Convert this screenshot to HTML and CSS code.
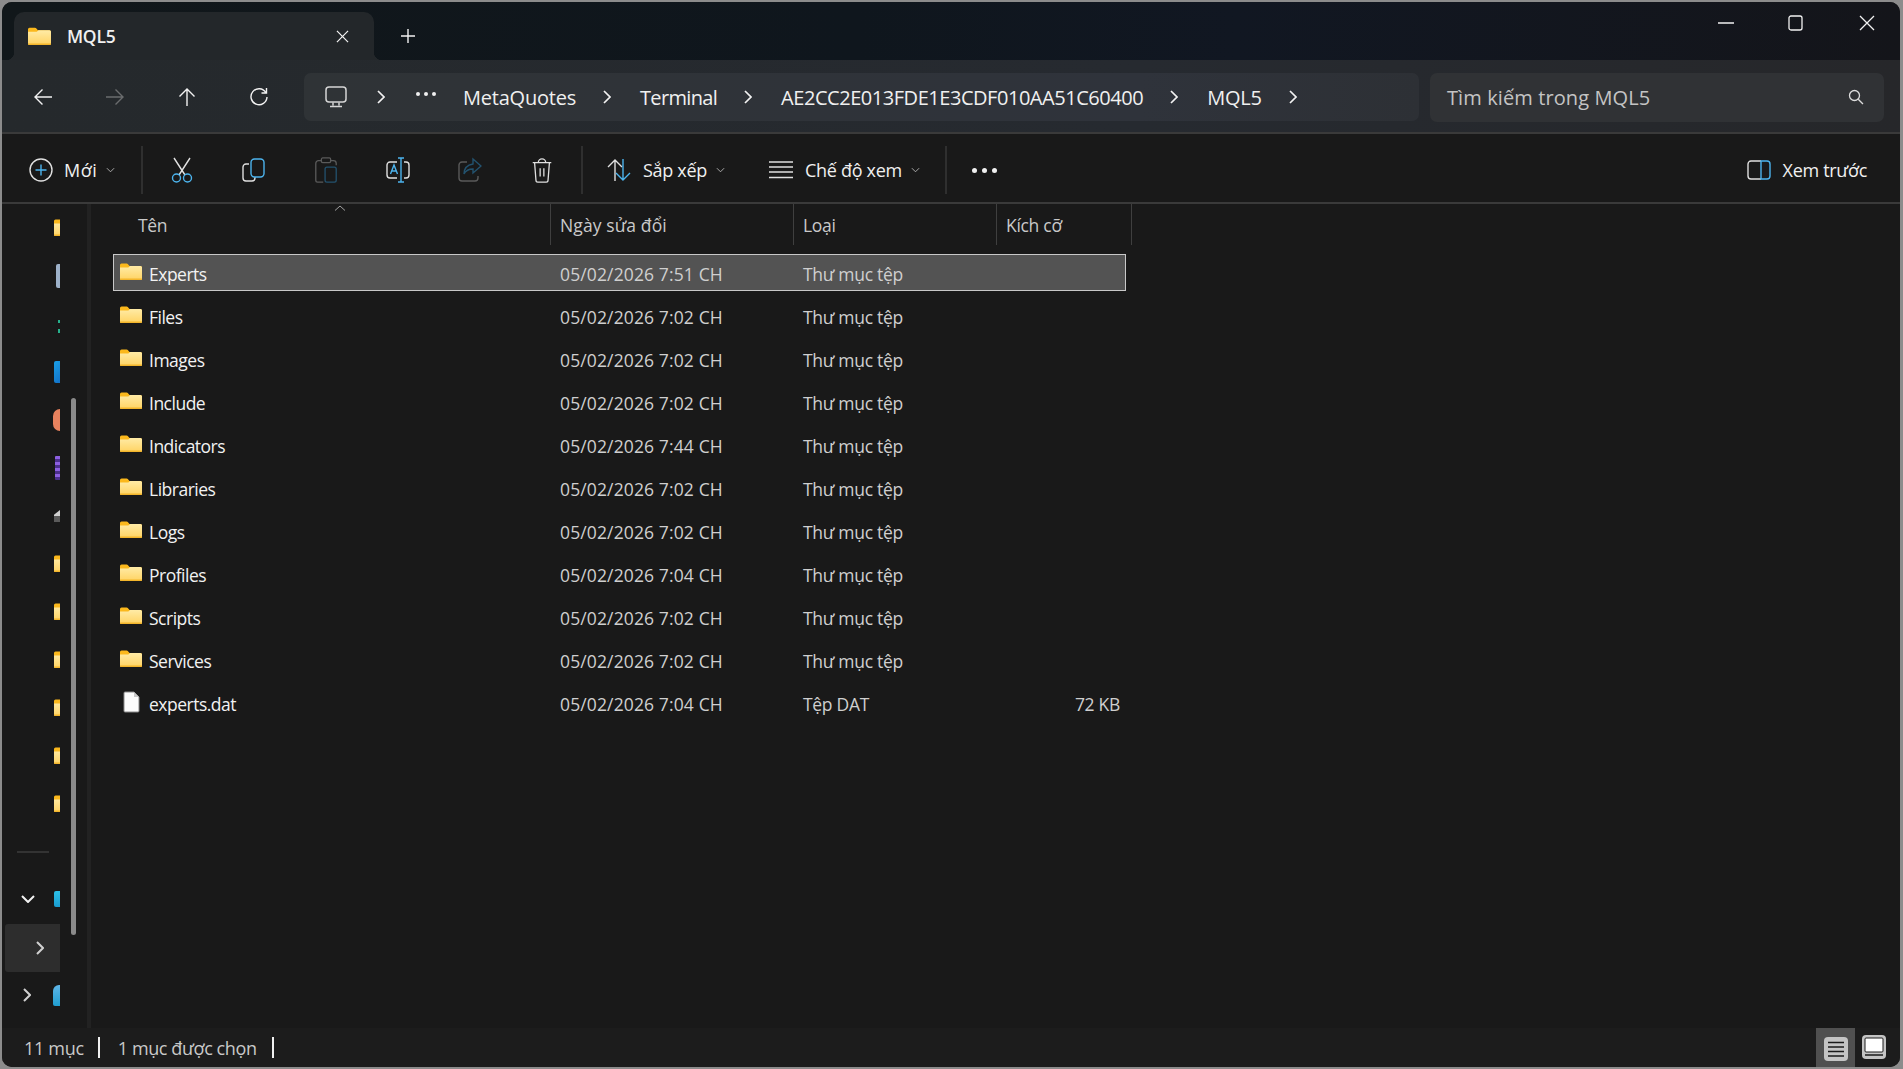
FILE: index.html
```html
<!DOCTYPE html>
<html lang="vi">
<head>
<meta charset="utf-8">
<title>MQL5</title>
<link rel="stylesheet" href="styles.css">
</head>
<body>
<svg class="defs" width="0" height="0" aria-hidden="true">
  <defs>
    <linearGradient id="fg" x1="0" y1="0" x2="0" y2="1"><stop offset="0" stop-color="#ffeba6"/><stop offset="1" stop-color="#ffd362"/></linearGradient>
    <symbol id="folder" viewBox="0 0 22 17">
      <path d="M0 2a1.5 1.5 0 0 1 1.5-1.5h5.2a1.5 1.5 0 0 1 1.1.5L9.5 3H20.5A1.5 1.5 0 0 1 22 4.5v3H0z" fill="#fbb81c"/>
      <path d="M0 4.5h8.4L10 3h10.5A1.5 1.5 0 0 1 22 4.5v11a1.5 1.5 0 0 1-1.5 1.5h-19A1.5 1.5 0 0 1 0 15.5z" fill="url(#fg)"/>
      <rect y="15.6" width="22" height="1.4" rx=".7" fill="#f3b52b"/>
    </symbol>
  </defs>
</svg>
<div class="window">
  <header class="titlebar">
    <div class="tab">
      <svg class="ic-folder-t"><use href="#folder"/></svg>
      <span class="tab-name">MQL5</span>
      <svg class="tab-x" viewBox="0 0 14 14"><path d="M1 1l12 12M13 1L1 13"/></svg>
    </div>
    <svg class="tab-plus" viewBox="0 0 16 16"><path d="M8 1v14M1 8h14"/></svg>
    <div class="winctl">
      <svg class="wc-min" viewBox="0 0 16 16"><path d="M0 8h16"/></svg>
      <svg class="wc-max" viewBox="0 0 15 16"><rect x="1" y="1" width="13" height="14" rx="2"/></svg>
      <svg class="wc-close" viewBox="0 0 16 16"><path d="M1 1l14 14M15 1L1 15"/></svg>
    </div>
  </header>

  <nav class="navbar">
    <div class="navbtns">
      <button class="nb"><svg viewBox="0 0 20 20"><path d="M19 10H2M9.5 2.5L2 10l7.5 7.5"/></svg></button>
      <button class="nb dim"><svg viewBox="0 0 20 20"><path d="M1 10h17M10.500 2.500L18 10l-7.500 7.500"/></svg></button>
      <button class="nb"><svg viewBox="0 0 20 20"><path d="M10 19V2M2.500 9.500L10 2l7.500 7.500"/></svg></button>
      <button class="nb"><svg viewBox="0 0 20 20"><path d="M16.800 5.500A8 8 0 1 0 18 10M17.500 1v5h-5"/></svg></button>
    </div>
    <div class="address">
      <svg class="pc" viewBox="0 0 22 22"><rect x="1" y="1" width="20" height="15" rx="3"/><path d="M8 16.500v3M14 16.500v3M5 20.500h12"/></svg>
      <svg class="chev"  viewBox="0 0 8 14"><path d="M1 1l6 6-6 6"/></svg>
      <span class="ell"><i></i><i></i><i></i></span>
      <span class="crumb">MetaQuotes</span>
      <svg class="chev" viewBox="0 0 8 14"><path d="M1 1l6 6-6 6"/></svg>
      <span class="crumb crumb-term">Terminal</span>
      <svg class="chev" viewBox="0 0 8 14"><path d="M1 1l6 6-6 6"/></svg>
      <span class="crumb crumb-id">AE2CC2E013FDE1E3CDF010AA51C60400</span>
      <svg class="chev" viewBox="0 0 8 14"><path d="M1 1l6 6-6 6"/></svg>
      <span class="crumb">MQL5</span>
      <svg class="chev" viewBox="0 0 8 14"><path d="M1 1l6 6-6 6"/></svg>
    </div>
    <div class="search">
      <span class="search-text">Tìm kiếm trong MQL5</span>
      <svg class="search-ic" viewBox="0 0 16 16"><circle cx="6.500" cy="6.500" r="5"/><path d="M10.200 10.200L15 15"/></svg>
    </div>
  </nav>

  <div class="cmdbar">
    <div class="cmd-new">
      <svg class="ic24" viewBox="0 0 24 24"><circle cx="12" cy="12" r="11" class="w"/><path d="M12 6.500v11M6.500 12h11" class="b"/></svg>
      <span>Mới</span>
      <svg class="dd" viewBox="0 0 10 6"><path d="M1 1l4 4 4-4"/></svg>
    </div>
    <i class="cmd-sep"></i>
    <div class="cmd-ic"><svg class="ic24" viewBox="0 0 24 26"><path d="M4 1l11 17M20 1L9 18" class="w"/><circle cx="6.500" cy="21" r="4" class="b"/><circle cx="17.500" cy="21" r="4" class="b"/></svg></div>
    <div class="cmd-ic"><svg class="ic24" viewBox="0 0 24 24"><path d="M7 6H4a3 3 0 0 0-3 3v11a3 3 0 0 0 3 3h6a3 3 0 0 0 3-3v-1" class="w"/><rect x="9" y="1" width="13" height="18" rx="3.500" class="b"/></svg></div>
    <div class="cmd-ic dimmed"><svg class="ic24" viewBox="0 0 24 28"><path d="M7 4H4a3 3 0 0 0-3 3v18a2 2 0 0 0 2 2h6M17 4h3a3 3 0 0 1 3 3v2" class="w"/><rect x="7" y="1" width="10" height="5" rx="1.500" class="w"/><rect x="11" y="11" width="12" height="16" rx="2" class="b"/></svg></div>
    <div class="cmd-ic"><svg class="ic24" viewBox="0 0 24 26"><path d="M11 5H4a3 3 0 0 0-3 3v10a3 3 0 0 0 3 3h7M18 5h2a3 3 0 0 1 3 3v10a3 3 0 0 1-3 3h-2" class="w"/><path d="M4.500 17L8 8l3.500 9M5.800 14h4.400M15 1v24M12 1h6M12 25h6" class="b"/></svg></div>
    <div class="cmd-ic dimmed"><svg class="ic24" viewBox="0 0 24 24"><path d="M9 4H4a3 3 0 0 0-3 3v13a3 3 0 0 0 3 3h13a3 3 0 0 0 3-3v-2" class="w"/><path d="M15 1l8 7-8 7v-4c-4 0-7 1-9 5 0-6 3-9 9-10z" class="b"/></svg></div>
    <div class="cmd-ic"><svg class="ic24" viewBox="0 0 22 28"><path d="M1 6h20M3 6l1.500 19a2 2 0 0 0 2 2h9a2 2 0 0 0 2-2L19 6M7 6a4 4 0 0 1 8 0M9 12v9M13 12v9" class="w"/></svg></div>
    <i class="cmd-sep"></i>
    <div class="cmd-sort">
      <svg class="ic24" viewBox="0 0 24 24"><path d="M8 23V2M1 9l7-7 7 7" class="w"/><path d="M16 1v21M9 15l7 7 7-7" class="b"/></svg>
      <span>Sắp xếp</span>
      <svg class="dd" viewBox="0 0 10 6"><path d="M1 1l4 4 4-4"/></svg>
    </div>
    <div class="cmd-view">
      <svg class="ic24" viewBox="0 0 24 18"><path d="M0 1h24M0 6h24M0 11h24M0 16.500h24" class="w"/></svg>
      <span>Chế độ xem</span>
      <svg class="dd" viewBox="0 0 10 6"><path d="M1 1l4 4 4-4"/></svg>
    </div>
    <i class="cmd-sep"></i>
    <div class="cmd-more"><i></i><i></i><i></i></div>
    <div class="cmd-preview">
      <svg class="ic24" viewBox="0 0 24 20"><path d="M14 1H4a3 3 0 0 0-3 3v12a3 3 0 0 0 3 3h10" class="w"/><path d="M14 1h6a3 3 0 0 1 3 3v12a3 3 0 0 1-3 3h-6z" class="b"/></svg>
      <span>Xem trước</span>
    </div>
  </div>

  <main class="main">
    <aside class="sidebar">
      <div class="tree">
        <div class="tr"><svg class="clip"><use href="#folder"/></svg></div>
        <div class="tr"><i class="mini m-doc"></i></div>
        <div class="tr"><i class="mini m-green"></i></div>
        <div class="tr"><i class="mini m-blue"></i></div>
        <div class="tr"><i class="mini m-orange"></i></div>
        <div class="tr"><i class="mini m-purple"></i></div>
        <div class="tr"><i class="mini m-drive"></i></div>
        <div class="tr"><svg class="clip"><use href="#folder"/></svg></div>
        <div class="tr"><svg class="clip"><use href="#folder"/></svg></div>
        <div class="tr"><svg class="clip"><use href="#folder"/></svg></div>
        <div class="tr"><svg class="clip"><use href="#folder"/></svg></div>
        <div class="tr"><svg class="clip"><use href="#folder"/></svg></div>
        <div class="tr"><svg class="clip"><use href="#folder"/></svg></div>
        <div class="tree-div"><i></i></div>
        <div class="tr exp"><svg class="cv-d" viewBox="0 0 14 8"><path d="M1 1l6 6 6-6"/></svg><i class="mini m-pc"></i></div>
        <div class="tr hov"><svg class="cv-r" viewBox="0 0 8 14"><path d="M1 1l6 6-6 6"/></svg></div>
        <div class="tr exp"><svg class="cv-r2" viewBox="0 0 8 14"><path d="M1 1l6 6-6 6"/></svg><i class="mini m-net"></i></div>
      </div>
      <i class="thumb"></i>
    </aside>
    <section class="list">
      <div class="thead">
        <div class="th th-name">Tên<svg class="sort-up" viewBox="0 0 12 6"><path d="M1 5.500L6 1l5 4.500"/></svg></div>
        <div class="th th-date">Ngày sửa đổi</div>
        <div class="th">Loại</div>
        <div class="th">Kích cỡ</div>
      </div>
      <div class="rows">
        <div class="row sel"><div class="c-name"><svg class="fi"><use href="#folder"/></svg>Experts</div><div class="c c-date">05/02/2026 7:51 CH</div><div class="c">Thư mục tệp</div><div class="c-size"></div></div>
        <div class="row"><div class="c-name"><svg class="fi"><use href="#folder"/></svg>Files</div><div class="c c-date">05/02/2026 7:02 CH</div><div class="c">Thư mục tệp</div><div class="c-size"></div></div>
        <div class="row"><div class="c-name"><svg class="fi"><use href="#folder"/></svg>Images</div><div class="c c-date">05/02/2026 7:02 CH</div><div class="c">Thư mục tệp</div><div class="c-size"></div></div>
        <div class="row"><div class="c-name"><svg class="fi"><use href="#folder"/></svg>Include</div><div class="c c-date">05/02/2026 7:02 CH</div><div class="c">Thư mục tệp</div><div class="c-size"></div></div>
        <div class="row"><div class="c-name"><svg class="fi"><use href="#folder"/></svg>Indicators</div><div class="c c-date">05/02/2026 7:44 CH</div><div class="c">Thư mục tệp</div><div class="c-size"></div></div>
        <div class="row"><div class="c-name"><svg class="fi"><use href="#folder"/></svg>Libraries</div><div class="c c-date">05/02/2026 7:02 CH</div><div class="c">Thư mục tệp</div><div class="c-size"></div></div>
        <div class="row"><div class="c-name"><svg class="fi"><use href="#folder"/></svg>Logs</div><div class="c c-date">05/02/2026 7:02 CH</div><div class="c">Thư mục tệp</div><div class="c-size"></div></div>
        <div class="row"><div class="c-name"><svg class="fi"><use href="#folder"/></svg>Profiles</div><div class="c c-date">05/02/2026 7:04 CH</div><div class="c">Thư mục tệp</div><div class="c-size"></div></div>
        <div class="row"><div class="c-name"><svg class="fi"><use href="#folder"/></svg>Scripts</div><div class="c c-date">05/02/2026 7:02 CH</div><div class="c">Thư mục tệp</div><div class="c-size"></div></div>
        <div class="row"><div class="c-name"><svg class="fi"><use href="#folder"/></svg>Services</div><div class="c c-date">05/02/2026 7:02 CH</div><div class="c">Thư mục tệp</div><div class="c-size"></div></div>
        <div class="row"><div class="c-name"><svg class="fi-doc" viewBox="0 0 17 22"><path d="M1 2a1 1 0 0 1 1-1h9l5 5v14a1 1 0 0 1-1 1H2a1 1 0 0 1-1-1z" fill="#fcfcfc" stroke="#8a8a8a"/><path d="M11 1v5h5z" fill="#c9c9c9"/></svg>experts.dat</div><div class="c c-date">05/02/2026 7:04 CH</div><div class="c">Tệp DAT</div><div class="c-size">72 KB</div></div>
      </div>
    </section>
  </main>

  <footer class="status">
    <span class="st-a">11 mục</span><i class="st-sep"></i>
    <span class="st-b">1 mục được chọn</span><i class="st-sep"></i>
    <div class="st-views">
      <div class="sv on"><svg viewBox="0 0 24 24"><rect width="24" height="24" rx="4" fill="#c4c4c4"/><path d="M4 5.500h16M4 10h16M4 14.500h16M4 19h16" stroke="#1a1a1a" stroke-width="1.500"/></svg></div>
      <div class="sv"><svg viewBox="0 0 24 24"><rect width="24" height="24" rx="4" fill="#c4c4c4"/><rect x="3" y="3" width="18" height="14" rx="1" fill="#fff" stroke="#1a1a1a"/><path d="M3 20h18" stroke="#1a1a1a" stroke-width="1.500"/></svg></div>
    </div>
  </footer>
</div>
</body>
</html>
```

FILE: styles.css
```css
* { box-sizing: border-box; }
html, body { height: 100%; }
body {
  margin: 0;
  padding: 2px 3px 2px 2px;
  background: #8c8c8c;
  font-family: "Open Sans", "Noto Sans", "Liberation Sans", sans-serif;
  color: #f0f0f0;
  overflow: hidden;
}
.defs { position: absolute; }
i { display: block; font-style: normal; }
button { background: none; border: 0; padding: 0; }
svg { display: block; flex: none; fill: none; }

.window {
  height: 1065px;
  display: flex;
  flex-direction: column;
  border-radius: 10px;
  overflow: hidden;
  background: #191919;
}

/* title bar */
.titlebar {
  height: 58px;
  flex: none;
  display: flex;
  align-items: flex-end;
  padding-left: 12px;
  background: linear-gradient(90deg, #11171a 0%, #0f161d 45%, #111722 65%, #14151a 100%);
}
.tab {
  width: 360px;
  height: 48px;
  background: #23272a;
  border-radius: 10px 10px 0 0;
  display: flex;
  align-items: center;
  padding-left: 14px;
  position: relative;
}
.tab::before, .tab::after {
  content: "";
  position: absolute;
  bottom: 0;
  width: 8px;
  height: 8px;
}
.tab::before { left: -8px; background: radial-gradient(circle at 0 0, transparent 8px, #23272a 8.500px); }
.tab::after { right: -8px; background: radial-gradient(circle at 100% 0, transparent 8px, #23272a 8.500px); }
.ic-folder-t { width: 23px; height: 18px; }
.tab-name { margin-left: 16px; font-size: 17.500px; font-weight: 600; letter-spacing: -.25px; }
.tab-x { width: 13px; height: 13px; margin-left: auto; margin-right: 25px; stroke: #f2f2f2; stroke-width: 1.300; }
.tab-plus { width: 16px; height: 16px; margin: 0 0 16px 26px; stroke: #f2f2f2; stroke-width: 1.400; }
.winctl { margin-left: auto; align-self: stretch; display: flex; align-items: center; padding: 0 25px 16px 0; }
.winctl svg { stroke: #f2f2f2; stroke-width: 1.300; }
.wc-min { width: 16px; height: 16px; }
.wc-max { width: 15px; height: 16px; margin-left: 54px; }
.wc-close { width: 16px; height: 16px; margin-left: 56px; }

/* nav bar */
.navbar {
  flex: none;
  display: flex;
  align-items: center;
  background: linear-gradient(90deg, #25292c, #262a30 60%, #26272a);
  border-bottom: 2px solid #3a3a3a;
  height: 74px;
  padding: 2px 16px 0 5px;
}
.navbtns { display: flex; width: 297px; flex: none; }
.nb { width: 72px; height: 40px; display: flex; align-items: center; justify-content: center; }
.nb svg { width: 20px; height: 20px; stroke: #f2f2f2; stroke-width: 1.400; }
.nb.dim svg { stroke: #6a6c6e; }
.address {
  width: 1115px;
  height: 48px;
  flex: none;
  background: linear-gradient(90deg, #2f3336, #2f333b 75%, #2d3035);
  border-radius: 7px;
  display: flex;
  align-items: center;
  padding-left: 21px;
  font-size: 20px;
}
.pc { width: 22px; height: 22px; stroke: #d6d6d6; stroke-width: 1.500; }
.chev { width: 8px; height: 14px; stroke: #f2f2f2; stroke-width: 1.700; margin: 0 29px 0 27px; }
.pc + .chev { margin: 0 31px 0 30px; }
.ell { display: flex; gap: 4px; margin-right: 27px; }
.ell i { width: 4px; height: 4px; border-radius: 50%; background: #f0f0f0; transform: translateY(-3px); }
.crumb { white-space: nowrap; letter-spacing: -.22px; }
.crumb-term { letter-spacing: -.67px; }
.crumb-id { letter-spacing: -.46px; }
.search {
  width: 454px;
  height: 49px;
  margin-left: 11px;
  background: #303235;
  border-radius: 7px;
  display: flex;
  align-items: center;
  padding: 0 20px 0 17px;
  font-size: 20px;
  color: #c4c4c4;
}
.search-text { letter-spacing: .1px; }
.search-ic { width: 16px; height: 16px; margin-left: auto; stroke: #dcdcdc; stroke-width: 1.300; }

/* command bar */
.cmdbar {
  height: 70px;
  flex: none;
  display: flex;
  align-items: center;
  background: #191919;
  border-bottom: 2px solid #3a3a3a;
  padding-top: 4px;
  font-size: 18px;
}
.cmdbar span { letter-spacing: -.3px; white-space: nowrap; }
.ic24 { width: 24px; height: 26px; stroke-width: 1.400; }
.ic24 .w { stroke: #e0e0e0; }
.ic24 .b { stroke: #4cb4ee; }
.dimmed .w { stroke: #5a5a5a; }
.dimmed .b { stroke: #23526e; }
.dd { width: 9px; height: 6px; stroke: #b8b8b8; stroke-width: 1; margin-left: 9px; }
.cmd-sep { width: 2px; height: 48px; background: #2f2f2f; flex: none; }
.cmd-new { width: 139px; padding-left: 27px; display: flex; align-items: center; flex: none; }
.cmdbar .cmd-new span { margin-left: 11px; letter-spacing: .5px; }
.cmd-ic { width: 72px; display: flex; justify-content: center; flex: none; }
.cmdbar > .cmd-sep:nth-child(2) { margin-right: 3px; }
.cmd-ic + .cmd-sep { margin-left: 3px; }
.cmd-sort { margin-left: 24px; display: flex; align-items: center; flex: none; }
.cmd-sort span { margin-left: 12px; }
.cmd-view { margin-left: 44px; display: flex; align-items: center; flex: none; }
.cmd-view svg.ic24 { height: 18px; }
.cmd-view span { margin-left: 12px; }
.cmd-view + .cmd-sep { margin-left: 25px; }
.cmd-more { margin-left: 25px; display: flex; gap: 5px; }
.cmd-more i { width: 5px; height: 5px; border-radius: 50%; background: #f0f0f0; }
.cmd-preview { margin-left: auto; margin-right: 33px; display: flex; align-items: center; }
.cmd-preview svg.ic24 { height: 20px; }
.cmd-preview span { margin-left: 12px; }

/* main */
.main { flex: 1; min-height: 0; display: flex; background: #191919; }
.sidebar {
  width: 89px;
  flex: none;
  position: relative;
  border-right: 4px solid #222;
}
.tree { width: 58px; overflow: hidden; }
.tr { height: 48px; position: relative; display: flex; align-items: center; overflow: hidden; }
.clip { width: 22px; height: 17px; margin: -2px 0 0 52px; flex: none; }
.mini { flex: none; }
.m-doc { margin-left: 54px; width: 4px; height: 24px; background: #9db1c9; border-radius: 2px 0 0 2px; }
.m-green { margin: 5px 0 0 56px; width: 2px; height: 13px; background: linear-gradient(#26b08c 0 3px, transparent 3px 9px, #26b08c 9px); }
.m-blue { margin-left: 52px; width: 6px; height: 22px; background: linear-gradient(135deg, #1aa0e8, #1272c8); border-radius: 2px 0 0 2px; }
.m-orange { margin-left: 51px; width: 7px; height: 22px; background: #e8825e; border-radius: 11px 0 0 11px; }
.m-purple { margin-left: 53px; width: 5px; height: 24px; background: repeating-linear-gradient(#8c5fe0 0 3px, #4b2f8c 3px 6px); border-radius: 1px 0 0 1px; }
.m-drive { margin-left: 52px; width: 6px; height: 12px; background: linear-gradient(#d0d0d0 0 6px, #5a5a5a 6px); clip-path: polygon(100% 0, 100% 100%, 0 100%, 0 40%); }
.tree-div { height: 47px; display: flex; align-items: center; padding-left: 15px; }
.tree-div i { width: 32px; height: 2px; background: #333; }
.m-pc { position: absolute; left: 52px; width: 6px; height: 16px; background: linear-gradient(#2cc0e8, #1a9cd0); border-radius: 2px 0 0 2px; }
.m-net { position: absolute; left: 51px; width: 7px; height: 21px; background: linear-gradient(#5fb6e8, #1f9ed0); border-radius: 6px 0 0 2px; }
.cv-d { position: absolute; left: 19px; width: 14px; height: 8px; stroke: #f2f2f2; stroke-width: 2; }
.cv-r { position: absolute; left: 34px; width: 8px; height: 14px; stroke: #d0d0d0; stroke-width: 2; }
.cv-r2 { position: absolute; left: 21px; width: 8px; height: 14px; stroke: #d0d0d0; stroke-width: 2; }
.hov { background: #2d2d2d; margin-left: 3px; border-radius: 3px 0 0 3px; margin-top: 1px; margin-bottom: -1px; }
.hov .cv-r { left: 31px; }
.thumb {
  position: absolute;
  left: 69px;
  top: 194px;
  width: 5px;
  height: 537px;
  background: #8a8a8a;
  border-radius: 3px;
}

/* list */
.list { flex: 1; min-width: 0; }
.thead { display: grid; grid-template-columns: 460px 243px 203px 135px; height: 41px; width: 1042px; }
.th {
  border-right: 1px solid #3f3f3f;
  display: flex;
  align-items: center;
  padding-left: 9px;
  font-size: 17.500px;
  color: #c9c9c9;
  letter-spacing: -.3px;
  position: relative;
}
.th-name { padding-left: 47px; }
.th-date { letter-spacing: .1px; }
.sort-up { position: absolute; left: 243px; top: 1px; width: 12px; height: 6px; stroke: #a0a0a0; stroke-width: 1; }
.rows { display: flex; flex-direction: column; gap: 6px; margin: 9px 0 0 22px; width: 1013px; }
.row {
  display: grid;
  grid-template-columns: 437px 243px 203px 130px;
  height: 37px;
  align-items: center;
  font-size: 17.500px;
  letter-spacing: -.3px;
  border: 1px solid transparent;
  padding-top: 3px;
}
.row.sel { background: #535353; border-color: #c8c8c8; }
.c-name { display: flex; align-items: center; color: #f2f2f2; margin-left: -1px; padding-left: 7px; letter-spacing: -.5px; }
.fi { width: 22px; height: 17px; margin: -5px 7px 0 0; }
.fi-doc { width: 17px; height: 22px; margin: -4px 9px 0 3px; }
.c { padding-left: 9px; color: #cfcfcf; }
.c-date { letter-spacing: .13px; }
.c-size { text-align: right; padding-right: 7px; color: #cfcfcf; }

/* status */
.status {
  height: 39px;
  flex: none;
  display: flex;
  align-items: center;
  background: #1c1c1c;
  font-size: 18px;
  color: #c9c9c9;
  letter-spacing: -.3px;
  padding-left: 22px;
}
.st-sep { width: 2px; height: 21px; background: #f0f0f0; margin-left: 14px; }
.st-b { margin-left: 18px; letter-spacing: -.4px; }
.st-b + .st-sep { margin-left: 15px; }
.st-views { margin-left: auto; display: flex; align-self: stretch; align-items: flex-start; margin-right: 7px; }
.sv { width: 38px; height: 39px; display: flex; justify-content: center; padding-top: 7px; }
.sv svg { width: 24px; height: 24px; }
.sv.on { width: 39px; background: #505050; padding-top: 9px; }
```
